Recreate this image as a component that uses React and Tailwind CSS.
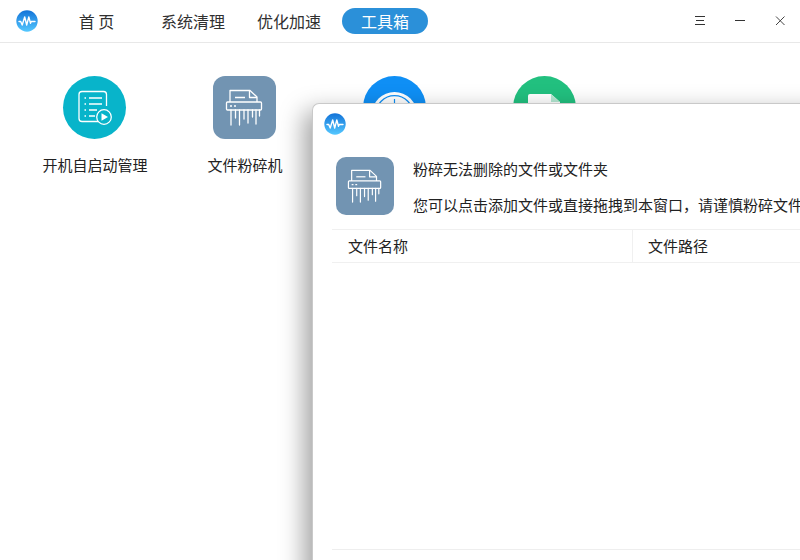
const FONT = "font-['Noto_Sans_CJK_SC','Noto_Sans',sans-serif]";

const NAV = [
  { label: "首 页", cls: "w-[97px]" },
  { label: "系统清理", cls: "w-[96px]" },
  { label: "优化加速", cls: "w-[96px]" },
];

const Logo = ({ size }) => (
  <svg width={size} height={size} viewBox="0 0 22 22">
    <defs>
      <linearGradient id={`lg${size}`} x1="0" y1="0" x2="0" y2="1">
        <stop offset="0" stopColor="#1273d8" />
        <stop offset="1" stopColor="#55c8ff" />
      </linearGradient>
    </defs>
    <circle cx="11" cy="11" r="10.7" fill={`url(#lg${size})`} />
    <path
      d="M3 11.500h1.700l1.500 3.500 2.500-8 2 8 2.100-8 1.700 6.300.8-1.800H19"
      fill="none"
      stroke="#fff"
      strokeWidth="1.400"
      strokeLinejoin="round"
      strokeLinecap="round"
    />
  </svg>
);

const Shredder = ({ size }) => (
  <svg width={size} height={size} viewBox="0 0 63 63" fill="none" stroke="#fff" strokeWidth="1.3">
    <path d="M17 26V14.500h20l7 6.500v5" strokeLinejoin="round" />
    <path d="M36.500 15v6.500h7.500" strokeLinejoin="round" />
    <path d="M22 21.500h10" />
    <rect x="13.500" y="26" width="35" height="8" rx="1" />
    <path d="M17 30h2M21 30h2" />
    <path d="M18 34v15M22.500 34v8M26.500 34v15M31 34v9M35 34v13M39.500 34v7M43 34v14M46.500 34v6" strokeLinecap="round" />
  </svg>
);

const StartupIcon = () => (
  <svg width="63" height="63" viewBox="0 0 63 63" fill="none" stroke="#fff" strokeWidth="1.3">
    <path d="M35 45.500H19a3 3 0 0 1-3-3V18.500a3 3 0 0 1 3-3h21.500a3 3 0 0 1 3 3V30" />
    <path d="M21.500 22h1.500M26 22h13M21.500 28h1.500M26 28h13M21.500 34h1.500M26 34h8M21.500 40h1.500M26 40h6" />
    <circle cx="41" cy="41" r="7.300" />
    <path d="M38.500 37.300l6.500 3.700-6.500 3.700z" fill="#fff" stroke="none" />
  </svg>
);

const ClockIcon = () => (
  <svg width="63" height="63" viewBox="0 0 63 63" fill="none">
    <circle cx="31.500" cy="38.500" r="22.500" fill="#fff" />
    <circle cx="31.500" cy="38.500" r="18.800" stroke="#0f8ff5" strokeWidth="1.300" />
    <path d="M31.500 23v5" stroke="#0f8ff5" strokeWidth="1.200" />
  </svg>
);

const DocIcon = () => (
  <svg width="63" height="63" viewBox="0 0 63 63">
    <path d="M15 20a2 2 0 0 1 2-2h21l9 8v16H15z" fill="#fff" />
    <path d="M38 18l9 8h-9z" fill="#b5e8d2" />
  </svg>
);

const TOOLS = [
  { label: "开机自启动管理", bg: "bg-[#08b4ca] rounded-full", icon: <StartupIcon /> },
  { label: "文件粉碎机", bg: "bg-[#7294b2] rounded-[12px]", icon: <Shredder size={63} /> },
  { label: "", bg: "bg-[#0f8ff5] rounded-full", icon: <ClockIcon /> },
  { label: "", bg: "bg-[#22c07f] rounded-full", icon: <DocIcon /> },
];

export default function App() {
  return (
    <div className={`${FONT} relative h-[560px] w-[800px] overflow-hidden bg-white text-[#222]`}>
      <header className="flex h-[43px] items-center border-b border-[#e8e8e8]">
        <div className="flex w-[48px] justify-end">
          <div className="mb-[1px] mr-[10px]">
            <Logo size={22} />
          </div>
        </div>
        <nav className="flex items-center">
          {NAV.map((n) => (
            <div
              key={n.label}
              className={`${n.cls} whitespace-pre text-center text-[16px] leading-[26px] text-[#303030]`}
            >
              {n.label}
            </div>
          ))}
          <div className="ml-[5px] flex h-[26px] w-[86px] items-center justify-center rounded-full bg-[#2b90d9] text-[16px] text-white">
            工具箱
          </div>
        </nav>
        <div className="ml-auto flex items-center pb-[1px] pr-[15px]">
          <svg width="10" height="10" viewBox="0 0 10 10" stroke="#333" className="mr-[30px]">
            <path d="M0 .500h10M1 4.500h8M0 8.500h10" />
          </svg>
          <svg width="10" height="10" viewBox="0 0 10 10" stroke="#333" className="mr-[30px]">
            <path d="M0 4.500h10" />
          </svg>
          <svg width="10" height="10" viewBox="0 0 10 10" stroke="#444">
            <path d="M1 .500l8.500 8.500M9.500 .500l-8.500 8.500" />
          </svg>
        </div>
      </header>

      <main className="grid grid-cols-[150px_150px_150px_150px] pl-[20px] pt-[33px]">
        {TOOLS.map((t, i) => (
          <div key={i} className="flex flex-col items-center">
            <div className={`${t.bg} mr-[1px] size-[63px] overflow-hidden`}>{t.icon}</div>
            <div className="mt-[14px] whitespace-nowrap text-[15px] leading-[24px] text-[#222]">{t.label}</div>
          </div>
        ))}
      </main>

      {/* dialog on top of the tool grid, runs off the right edge */}
      <section className="absolute left-[312px] top-[103px] flex h-[560px] w-[600px] flex-col rounded-tl-[7px] border-l border-t border-[#c9c9c9] bg-white shadow-[-8px_8px_24px_rgba(0,0,0,0.36)]">
        <div className="pl-[11px] pt-[9px]">
          <Logo size={22} />
        </div>
        <div className="mt-[22px] flex pl-[23px]">
          <div className="size-[58px] shrink-0 rounded-[10px] bg-[#7294b2]">
            <Shredder size={58} />
          </div>
          <div className="ml-[19px] whitespace-nowrap text-[15px] leading-[24px] text-[#222]">
            <div>粉碎无法删除的文件或文件夹</div>
            <div className="mt-[12px]">您可以点击添加文件或直接拖拽到本窗口，请谨慎粉碎文件</div>
          </div>
        </div>
        <div className="ml-[19px] mt-[12px] flex h-[34px] items-center border-y border-[#f0f0f0] text-[15px] text-[#222]">
          <div className="flex h-full w-[301px] items-center border-r border-[#f0f0f0] pl-[16px] pt-[1px]">文件名称</div>
          <div className="pl-[15px] pt-[1px]">文件路径</div>
        </div>
        <div className="ml-[19px] mt-[286px] border-t border-[#eeeeee]" />
      </section>
    </div>
  );
}
